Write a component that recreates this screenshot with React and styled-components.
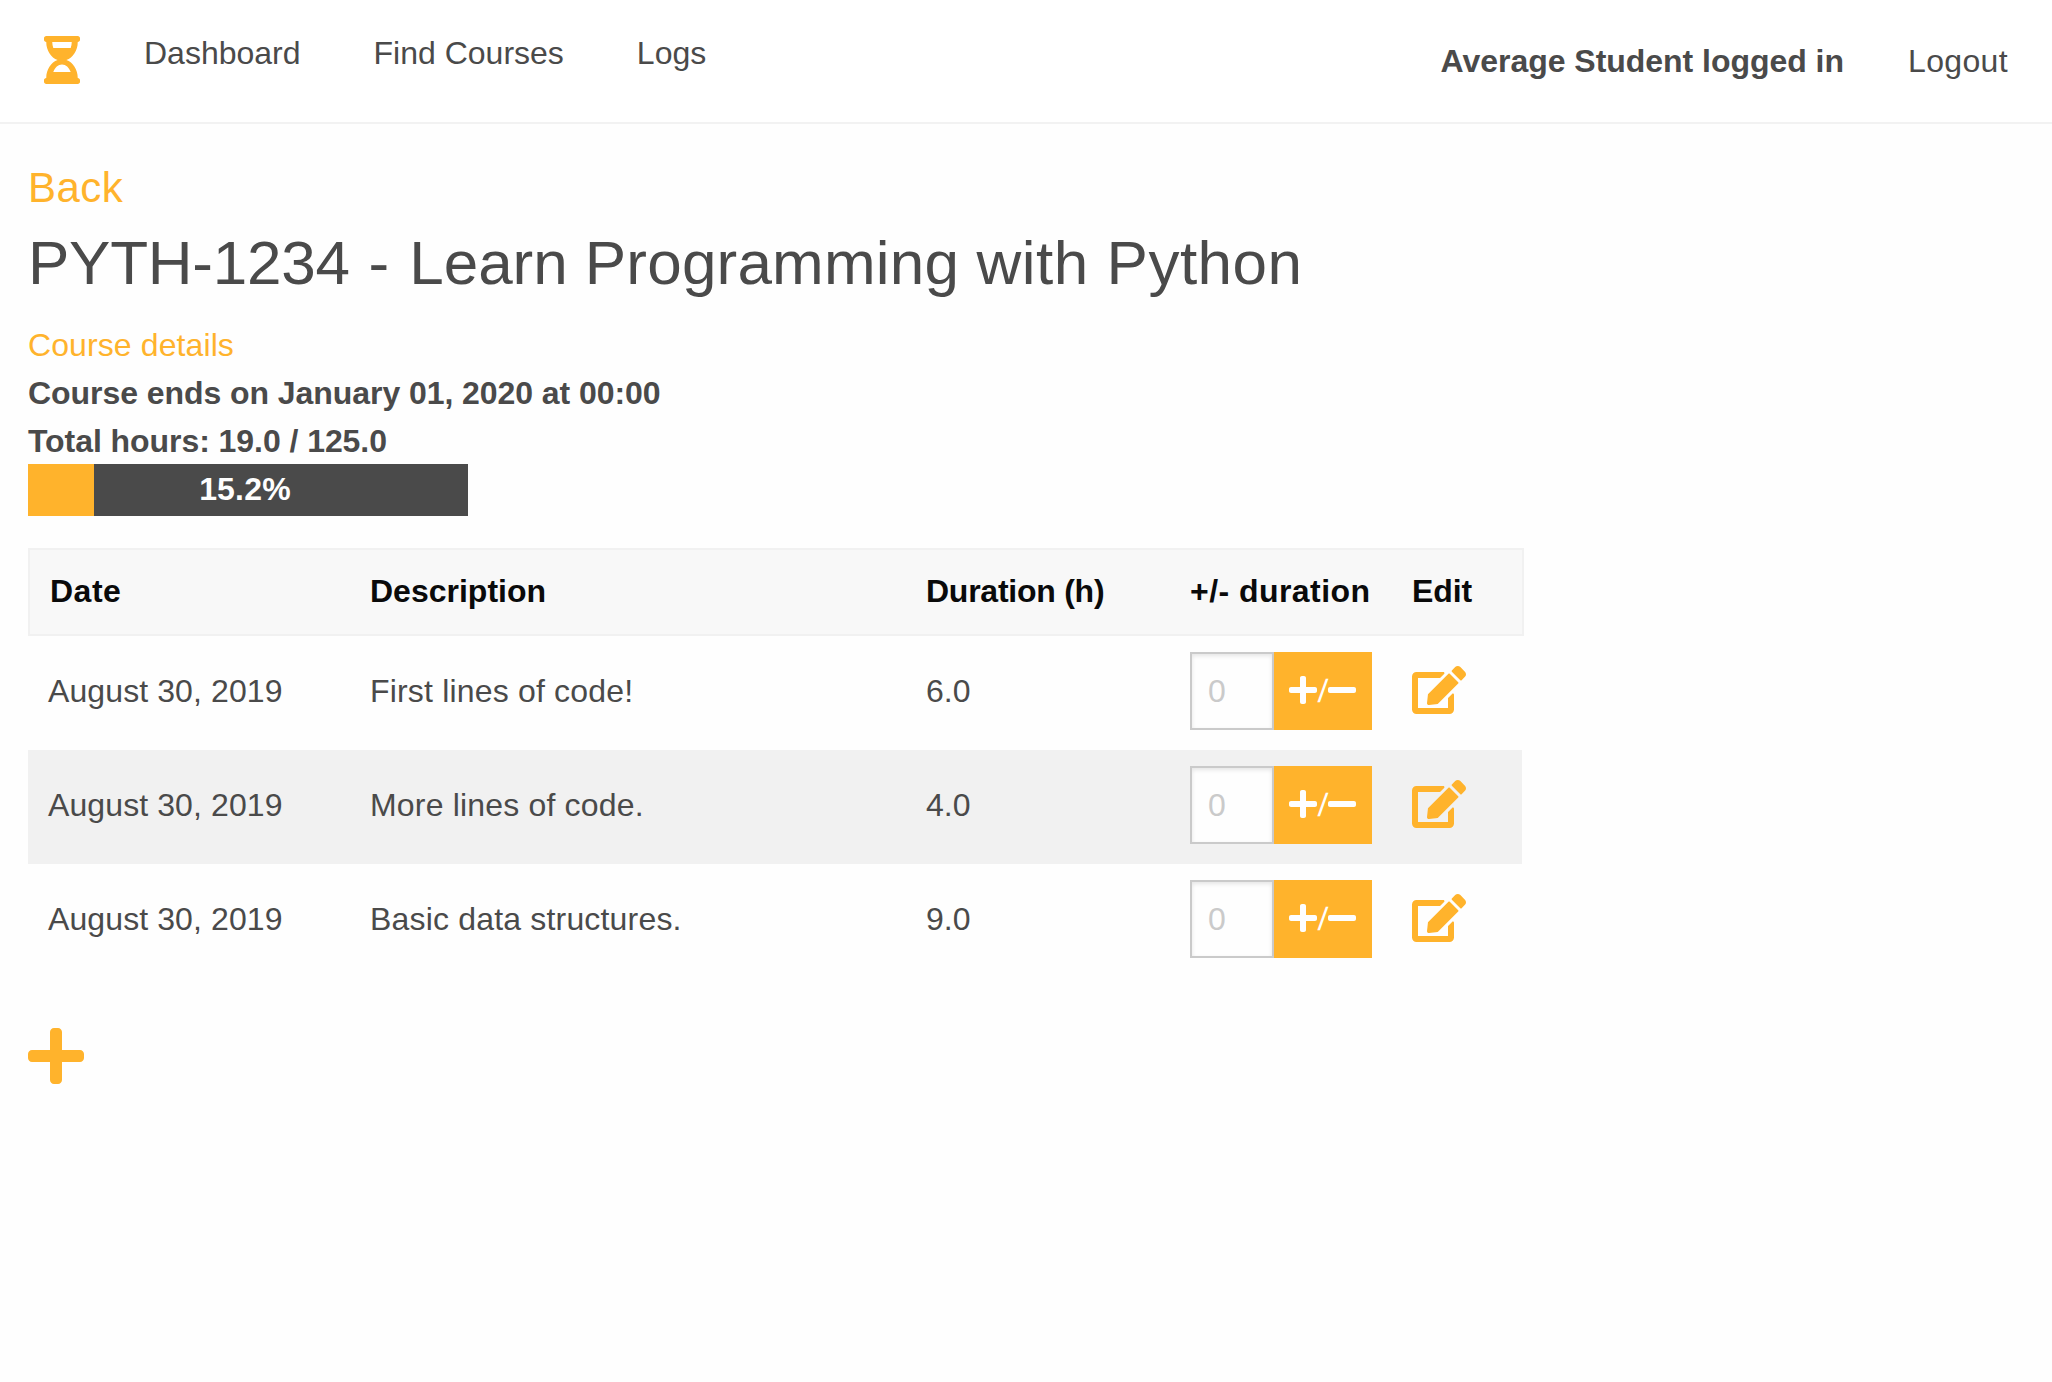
import React from "react";
import styled, { createGlobalStyle } from "styled-components";
import { FaEdit, FaHourglassHalf, FaMinus, FaPlus } from "react-icons/fa";

const ORANGE = "#ffb32c";
const GREY = "#4a4a4a";
const PROGRESS_WIDTH = 440;

const GlobalStyle = createGlobalStyle`
  *, *::before, *::after { box-sizing: border-box; }
  body {
    margin: 0;
    background: #fefefe;
    color: ${GREY};
    font: 32px/48px "Liberation Sans", Arial, sans-serif;
  }
  a { color: inherit; text-decoration: none; }
  svg { display: block; flex: none; }
`;

const TopBar = styled.header`
  display: flex;
  justify-content: space-between;
  height: 124px;
  padding: 0 44px;
  background: #fff;
  border-bottom: 2px solid #f2f2f2;
`;

const Menu = styled.nav`
  display: flex;
  padding-top: 29px;
`;

const Logo = styled.a`
  margin: 7px 64px 0 0;
  color: ${ORANGE};
`;

const LogoIcon = styled(FaHourglassHalf)`
  width: 36px;
  height: 48px;
`;

const MenuLink = styled.a`
  margin-right: 73px;
`;

const Account = styled.div`
  display: flex;
  gap: 64px;
  padding-top: 37px;
`;

const UserName = styled.strong`
  letter-spacing: -0.03px;
`;

const LogoutLink = styled.a`
  letter-spacing: 0.35px;
`;

const Main = styled.main`
  padding: 40px 28px;
`;

const BackLink = styled.a`
  display: block;
  width: max-content;
  color: ${ORANGE};
  font-size: 42px;
  line-height: 48px;
  letter-spacing: 0.5px;
`;

const Title = styled.h1`
  margin: 8px 0 15px;
  font-size: 62px;
  font-weight: 400;
  line-height: 86px;
`;

const TitlePart = styled.span`
  letter-spacing: ${(p) => p.$track}px;
`;

const Details = styled.div`
  display: flex;
  flex-direction: column;
  align-items: flex-start;
  margin-bottom: -1px;
`;

const DetailsLink = styled.a`
  color: ${ORANGE};
  letter-spacing: 0.1px;
`;

const DetailLine = styled.strong`
  letter-spacing: -0.06px;
`;

const Progress = styled.div`
  display: grid;
  width: ${PROGRESS_WIDTH}px;
  height: 52px;
  background: ${GREY};
`;

const Meter = styled.div`
  grid-area: 1 / 1;
  background: ${ORANGE};
`;

const MeterLabel = styled.strong`
  grid-area: 1 / 1;
  padding: 1px 6px 0 0;
  color: #fefefe;
  text-align: center;
  letter-spacing: 0.2px;
`;

const Table = styled.div`
  width: 1496px;
  margin-top: 32px;
`;

const Row = styled.div`
  display: grid;
  grid-template-columns: 322px 556px 264px 222px 1fr;
  align-items: center;
  width: 1494px;
  height: 114px;
  padding-left: 20px;
  background: ${(p) => (p.$striped ? "#f1f1f1" : "transparent")};
`;

const HeadRow = styled(Row)`
  width: 1496px;
  height: 88px;
  padding: 0 0 2px 18px;
  background: #f8f8f8;
  border: 2px solid #f1f1f1;
  color: #0a0a0a;
  font-weight: 700;
`;

const HeadCell = styled.div`
  padding-left: ${(p) => p.$indent || 0}px;
  letter-spacing: ${(p) => p.$track || 0}px;
`;

const Cell = styled.div`
  padding-bottom: 4px;
  letter-spacing: ${(p) => p.$track || 0}px;
`;

const Adjust = styled.form`
  display: flex;
  width: 182px;
  height: 78px;
  margin-bottom: 4px;
`;

const HoursInput = styled.input`
  width: 84px;
  height: 78px;
  margin: 0;
  padding: 0 0 0 16px;
  border: 2px solid #cacaca;
  border-radius: 0;
  background: #fefefe;
  box-shadow: inset 0 2px 4px rgba(10, 10, 10, 0.1);
  font: inherit;
  &::placeholder { color: #cacaca; opacity: 1; }
`;

const AdjustButton = styled.button`
  display: flex;
  align-items: center;
  justify-content: center;
  width: 98px;
  height: 78px;
  margin: 0;
  padding: 0 1px 2px 0;
  border: 0;
  background: ${ORANGE};
  color: #fefefe;
  font: inherit;

  svg {
    width: 28px;
    height: 32px;
  }
`;

const Slash = styled.span`
  width: 11px;
  padding: 2px 0 0 1px;
  transform: skewX(-5deg);
`;

const EditLink = styled.a`
  display: block;
  width: 54px;
  margin-bottom: 6px;
  color: ${ORANGE};
`;

const EditIcon = styled(FaEdit)`
  width: 54px;
  height: 48px;
`;

const AddLink = styled.a`
  display: block;
  width: 56px;
  margin-top: 46px;
  color: ${ORANGE};
`;

const AddIcon = styled(FaPlus)`
  width: 56px;
  height: 64px;
`;

const entries = [
  { date: "August 30, 2019", text: "First lines of code!", hours: "6.0" },
  { date: "August 30, 2019", text: "More lines of code.", hours: "4.0" },
  { date: "August 30, 2019", text: "Basic data structures.", hours: "9.0" },
];

function EntryRow({ entry, striped }) {
  return (
    <Row $striped={striped}>
      <Cell $track={0.1}>{entry.date}</Cell>
      <Cell $track={0.18}>{entry.text}</Cell>
      <Cell>{entry.hours}</Cell>
      <Adjust>
        <HoursInput placeholder="0" />
        <AdjustButton type="button">
          <FaPlus />
          <Slash>/</Slash>
          <FaMinus />
        </AdjustButton>
      </Adjust>
      <EditLink href="#">
        <EditIcon />
      </EditLink>
    </Row>
  );
}

export default function App() {
  return (
    <>
      <GlobalStyle />
      <TopBar>
        <Menu>
          <Logo href="#">
            <LogoIcon />
          </Logo>
          <MenuLink href="#">Dashboard</MenuLink>
          <MenuLink href="#">Find Courses</MenuLink>
          <MenuLink href="#">Logs</MenuLink>
        </Menu>
        <Account>
          <UserName>Average Student logged in</UserName>
          <LogoutLink href="#">Logout</LogoutLink>
        </Account>
      </TopBar>
      <Main>
        <BackLink href="#">Back</BackLink>
        <Title>
          <TitlePart $track={-0.25}>PYTH-1234</TitlePart>
          <TitlePart $track={1.5}> - </TitlePart>
          <TitlePart $track={-0.05}>Learn </TitlePart>
          <TitlePart $track={0.2}>Programming </TitlePart>
          <TitlePart $track={0.5}>with Python</TitlePart>
        </Title>
        <Details>
          <DetailsLink href="#">Course details</DetailsLink>
          <DetailLine>Course ends on January 01, 2020 at 00:00</DetailLine>
          <DetailLine>Total hours: 19.0 / 125.0</DetailLine>
        </Details>
        <Progress>
          <Meter style={{ width: Math.floor((PROGRESS_WIDTH * 19) / 125) }} />
          <MeterLabel>15.2%</MeterLabel>
        </Progress>
        <Table>
          <HeadRow>
            <HeadCell $indent={2} $track={0.5}>Date</HeadCell>
            <HeadCell>Description</HeadCell>
            <HeadCell $track={-0.25}>Duration (h)</HeadCell>
            <HeadCell $track={0.45}>+/- duration</HeadCell>
            <HeadCell $track={-0.1}>Edit</HeadCell>
          </HeadRow>
          {entries.map((entry, i) => (
            <EntryRow key={i} entry={entry} striped={i % 2 === 1} />
          ))}
        </Table>
        <AddLink href="#">
          <AddIcon />
        </AddLink>
      </Main>
    </>
  );
}
